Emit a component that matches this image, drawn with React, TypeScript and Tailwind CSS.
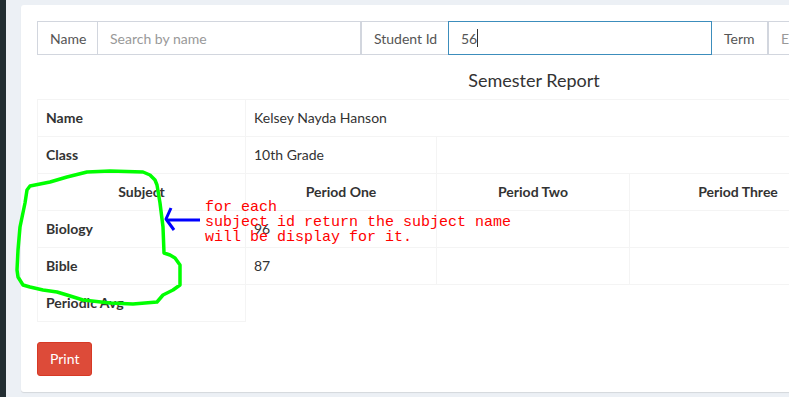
import React from "react";

const cell = "border border-[#f4f4f4] px-2 py-2 leading-[20px] text-[14px] text-[#333] align-top";

export default function App() {
  return (
    <div
      className="relative flex w-[789px] h-[397px] overflow-hidden bg-[#ecf0f5]"
      style={{ fontFamily: "Lato, 'Open Sans', sans-serif" }}
    >
      <div className="w-[6px] shrink-0 bg-[#222d32]" />
      <div className="shrink-0 pl-[15px] pt-[5px]">
        <div className="w-[1026px] h-[387px] rounded-[3px] bg-white shadow-[0_1px_1px_rgba(0,0,0,0.1)] p-4">
          {/* search bar */}
          <div className="flex h-[34px] text-[14px] text-[#555]">
            <div className="w-[61px] border border-[#d2d6de] px-3 flex items-center">Name</div>
            <div className="w-[263px] border-y border-r border-[#d2d6de] px-3 flex items-center text-[#999]">
              Search by name
            </div>
            <div className="w-[87px] border-y border-l border-[#d2d6de] px-3 flex items-center whitespace-nowrap">
              Student Id
            </div>
            <div className="w-[264px] border border-[#3c8dbc] px-3 flex items-center">
              56<span className="inline-block w-px h-[18px] bg-[#333]" />
            </div>
            <div className="w-[56px] border-y border-r border-[#d2d6de] px-3 flex items-center">Term</div>
            <div className="w-[263px] border border-[#d2d6de] px-3 flex items-center text-[#999]">
              Enter term
            </div>
          </div>

          <div className="h-[44px] pt-[15px] text-center text-[18px] leading-[20px] text-[#333]">
            Semester Report
          </div>

          <table className="table-fixed w-[994px] border-collapse">
            <colgroup>
              <col className="w-[208px]" />
              <col className="w-[191px]" />
              <col className="w-[193px]" />
              <col className="w-[217px]" />
              <col className="w-[185px]" />
            </colgroup>
            <tbody>
              <tr>
                <td className={`${cell} font-bold`}>Name</td>
                <td className={cell} colSpan={4}>Kelsey Nayda Hanson</td>
              </tr>
              <tr>
                <td className={`${cell} font-bold`}>Class</td>
                <td className={cell}>10th Grade</td>
                <td className={cell} colSpan={3}></td>
              </tr>
              <tr>
                <th className={`${cell} font-bold text-center`}>Subject</th>
                <th className={`${cell} font-bold text-center`}>Period One</th>
                <th className={`${cell} font-bold text-center`}>Period Two</th>
                <th className={`${cell} font-bold text-center`}>Period Three</th>
                <th className={`${cell} font-bold text-center`}>Semester Exam</th>
              </tr>
              <tr>
                <td className={`${cell} font-bold`}>Biology</td>
                <td className={cell}>96</td>
                <td className={cell}></td>
                <td className={cell}></td>
                <td className={cell}></td>
              </tr>
              <tr>
                <td className={`${cell} font-bold`}>Bible</td>
                <td className={cell}>87</td>
                <td className={cell}></td>
                <td className={cell}></td>
                <td className={cell}></td>
              </tr>
              <tr>
                <td className={`${cell} font-bold`}>Periodic Avg</td>
              </tr>
            </tbody>
          </table>

          <button className="mt-[20px] h-[34px] px-3 rounded-[3px] bg-[#dd4b39] border border-[#d73925] text-white text-[14px] leading-[20px]">
            Print
          </button>
        </div>
      </div>

      {/* annotations */}
      <svg className="absolute left-0 top-0 pointer-events-none" width="789" height="397" viewBox="0 0 789 397">
        <path
          d="M27,190 L30,186 L50,182 L67,177 L87,172 L110,171 L143,172 L150,175 L155,180 L157,185 L160,203 L163,227 L164,253 L170,255 L175,258 L180,265 L180,285 L173,290 L163,295 L157,302 L133,304 L110,303 L83,300 L67,295 L57,292 L43,290 L30,287 L23,285 L18,277 L17,270 L18,250 L20,227 L25,203 Z"
          fill="none"
          stroke="#00ff00"
          strokeWidth="3.5"
          strokeLinejoin="round"
          strokeLinecap="round"
        />
        <path d="M166,220 L200,220" stroke="#0000ff" strokeWidth="3" fill="none" />
        <path d="M171,208 L166,219 L174,230" stroke="#0000ff" strokeWidth="3" fill="none" strokeLinejoin="round" />
      </svg>
      <div
        className="absolute left-[205px] top-[200px] whitespace-pre text-[15px] leading-[15px] text-[#ff0000] pointer-events-none"
        style={{ fontFamily: "'Liberation Mono', monospace" }}
      >
        {"for each\nsubject id return the subject name\nwill be display for it."}
      </div>
    </div>
  );
}
